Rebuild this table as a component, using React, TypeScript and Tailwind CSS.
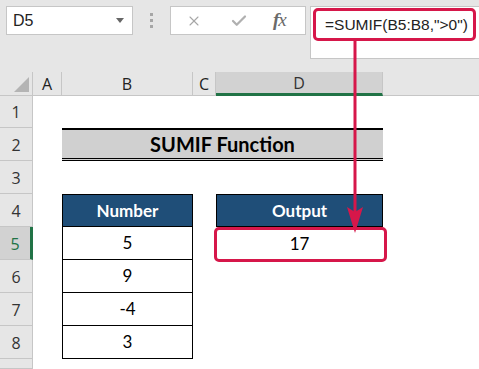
import { Check, X } from "lucide-react";

const cols = ["A", "B", "C", "D"];
const numbers = [5, 9, -4, 3];

function RowHead({ n, active }: { n?: number; active?: boolean }) {
  return (
    <div
      className={`flex items-end justify-center pb-[3px] border-b border-r text-[16px] ${
        active
          ? "bg-[#d2d2d2] border-b-[#c6c6c6] border-r-[3px] border-r-[#217346] text-[#217346]"
          : "bg-[#e6e6e6] border-[#c6c6c6] text-[#333]"
      }`}
    >
      {n}
    </div>
  );
}

export default function App() {
  return (
    <div className="relative w-[479px] h-[369px] overflow-hidden bg-[#e6e6e6] font-['Open_Sans','Liberation_Sans',sans-serif]">
      {/* formula bar */}
      <div className="flex items-start h-[72px] pl-[6px] pt-[6px]">
        <div className="flex items-center justify-between w-[127px] h-[29px] bg-white border border-[#c6c6c6] pl-[6px] pr-[8px]">
          <span className="text-[16px] text-[#222] font-['Liberation_Sans',sans-serif]">D5</span>
          <svg width="8" height="5" viewBox="0 0 8 5">
            <path d="M0 0h8L4 5z" fill="#666" />
          </svg>
        </div>
        <div className="flex flex-col items-center justify-center gap-[3px] w-[37px] h-[29px]">
          <span className="w-[3px] h-[3px] bg-[#a6a6a6]" />
          <span className="w-[3px] h-[3px] bg-[#a6a6a6]" />
          <span className="w-[3px] h-[3px] bg-[#a6a6a6]" />
        </div>
        <div className="flex items-center w-[136px] h-[29px] bg-white border border-[#c6c6c6] pl-[15px]">
          <X className="w-[16px] h-[16px] text-[#a6a6a6]" strokeWidth={1.6} />
          <Check className="ml-[28px] w-[18px] h-[18px] text-[#b0b0b0]" strokeWidth={3} />
          <span className="ml-[25px] text-[19px] italic text-[#6a6a6a] font-['Liberation_Serif',serif] tracking-[-1px]">
            <b>f</b>x
          </span>
        </div>
        <div className="relative flex-1 ml-[4px] -mr-[4px] h-[53px] bg-white border border-[#c6c6c6]">
          <div className="absolute left-[2px] top-[1px] w-[163px] h-[33px] border-[3px] border-[#d6174a] rounded-[5px] flex items-center pl-[9px]">
            <span className="text-[15.5px] text-[#222] font-['Liberation_Sans',sans-serif]">
              =SUMIF(B5:B8,"&gt;0")
            </span>
          </div>
        </div>
      </div>

      {/* sheet */}
      <div className="grid grid-cols-[33px_29px_131px_23px_167px_1fr] grid-rows-[24px_32px_repeat(7,33px)_1fr] h-[297px] bg-white">
        {/* column header row */}
        <div className="relative bg-[#e6e6e6] border-r border-b border-[#c6c6c6]">
          <svg className="absolute right-[3px] bottom-[3px]" width="15" height="15" viewBox="0 0 15 15">
            <path d="M15 0V15H0z" fill="#b4b4b4" />
          </svg>
        </div>
        {cols.map((c) => (
          <div
            key={c}
            className={`flex items-center justify-center text-[16px] border-r ${
              c === "D"
                ? "bg-[#d2d2d2] border-r-[#c6c6c6] border-b-[3px] border-b-[#217346] text-[#333]"
                : "bg-[#e6e6e6] border-[#c6c6c6] border-b text-[#222]"
            }`}
          >
            {c}
          </div>
        ))}
        <div className="bg-[#e6e6e6] border-b border-[#c6c6c6]" />

        {/* row 1 */}
        <RowHead n={1} />
        <div className="col-span-5" />

        {/* row 2 */}
        <RowHead n={2} />
        <div />
        <div className="col-span-3 flex items-center justify-center bg-[#d0d0d0] border-t-2 border-t-black border-b-[3px] border-double border-b-black text-[20px] font-bold text-black font-['Lato',sans-serif]">
          SUMIF Function
        </div>
        <div />

        {/* row 3 */}
        <RowHead n={3} />
        <div className="col-span-5" />

        {/* row 4 */}
        <RowHead n={4} />
        <div />
        <div className="flex items-center justify-center bg-[#1f4e78] border border-black text-[17px] font-bold text-white font-['Lato',sans-serif]">
          Number
        </div>
        <div />
        <div className="flex items-center justify-center bg-[#1f4e78] border border-black text-[17px] font-bold text-white font-['Lato',sans-serif]">
          Output
        </div>
        <div />

        {/* rows 5-8 */}
        {numbers.map((v, i) => (
          <div key={v} className="contents">
            <RowHead n={i + 5} active={i === 0} />
            <div />
            <div className="flex items-center justify-center border-x border-b border-black text-[17px] text-black font-['Lato',sans-serif]">
              {v}
            </div>
            <div />
            {i === 0 ? (
              <div className="relative flex items-center justify-center text-[17px] text-black font-['Lato',sans-serif]">
                <div className="absolute -left-[2px] -right-[4px] top-0 -bottom-[2px] border-[3px] border-[#d6174a] rounded-[5px]" />
                17
              </div>
            ) : (
              <div />
            )}
            <div />
          </div>
        ))}

        {/* row 9, only a sliver shows */}
        <RowHead />
        <div className="col-span-5" />
      </div>

      {/* arrow from formula to output */}
      <svg className="absolute left-0 top-0 pointer-events-none" width="479" height="369">
        <line x1="355" y1="40" x2="355" y2="222" stroke="#d6174a" strokeWidth="3" />
        <path d="M347 207 L355 212 L363 207 L355 233 Z" fill="#d6174a" />
      </svg>
    </div>
  );
}
